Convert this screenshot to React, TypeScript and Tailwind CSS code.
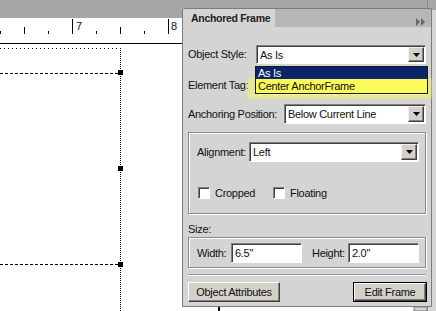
import type { ReactNode } from "react";

// quarter-inch ticks, 96px to the inch
const TICKS = [0, 24, 48, 72, 96, 120, 144, 168, 192];

function DropArrow() {
  return (
    <div className="w-[16px] my-[1px] mr-[1px] flex items-center justify-center bg-[#d4d0c8] border border-t-[#f0f0f0] border-l-[#f0f0f0] border-b-[#404040] border-r-[#404040] shadow-[inset_-1px_-1px_0_#808080]">
      <svg width="7" height="4" viewBox="0 0 7 4">
        <path d="M0 0h7L3.5 4z" fill="#000" />
      </svg>
    </div>
  );
}

function Select({ value, className = "" }: { value: string; className?: string }) {
  return (
    <div
      className={`flex bg-white border border-t-[#808080] border-l-[#808080] border-b-white border-r-white shadow-[inset_1px_1px_0_#404040] ${className}`}
    >
      <span className="flex-1 pl-[3px] pt-[1px] leading-[16px] whitespace-nowrap">{value}</span>
      <DropArrow />
    </div>
  );
}

function TextBox({ value, className = "" }: { value: string; className?: string }) {
  return (
    <div
      className={`h-[20px] bg-white border border-t-[#808080] border-l-[#808080] border-b-white border-r-white shadow-[inset_1px_1px_0_#404040] pl-[3px] pt-[1px] leading-[16px] ${className}`}
    >
      {value}
    </div>
  );
}

function Checkbox({ label, className = "" }: { label: string; className?: string }) {
  return (
    <div className={`flex items-center gap-[5px] ${className}`}>
      <div className="w-[12px] h-[12px] bg-white border border-t-[#808080] border-l-[#808080] border-b-white border-r-white shadow-[inset_1px_1px_0_#404040]" />
      <span>{label}</span>
    </div>
  );
}

function Button({ children, isDefault, className = "" }: { children: ReactNode; isDefault?: boolean; className?: string }) {
  const face = (
    <div className="flex-1 flex items-center justify-center bg-[#d4d0c8] border border-t-white border-l-white border-b-[#404040] border-r-[#404040] shadow-[inset_-1px_-1px_0_#808080] whitespace-nowrap">
      {children}
    </div>
  );
  if (isDefault) {
    return <div className={`h-[20px] flex border border-black ${className}`}>{face}</div>;
  }
  return <div className={`h-[20px] flex ${className}`}>{face}</div>;
}

function Ruler() {
  return (
    <svg width="427" height="25" className="block">
      {TICKS.map((x, i) => {
        const kind = (((i - 3) % 4) + 4) % 4;
        const top = kind === 0 ? 1 : kind === 2 ? 9 : 13;
        return <line key={x} x1={x + 0.5} x2={x + 0.5} y1={top} y2={16} stroke="#000" strokeWidth="1" />;
      })}
      <text x="76" y="12" fontSize="11" fontFamily="Liberation Sans, Arial, sans-serif" fill="#101030">
        7
      </text>
      <text x="171" y="12" fontSize="11" fontFamily="Liberation Sans, Arial, sans-serif" fill="#101030">
        8
      </text>
    </svg>
  );
}

function PageCanvas() {
  // the anchored frame outline on the document page
  return (
    <svg width="427" height="267" className="block">
      <line x1="0" x2="121" y1="4.5" y2="4.5" stroke="#000" strokeDasharray="1 3" />
      <line x1="120.5" x2="120.5" y1="4" y2="267" stroke="#000" strokeDasharray="1 1" />
      <line x1="0" x2="118" y1="29.5" y2="29.5" stroke="#000" strokeDasharray="3 2" />
      <line x1="0" x2="118" y1="220.5" y2="220.5" stroke="#000" strokeDasharray="3 2" />
      <rect x="118" y="26" width="5" height="5" fill="#000" />
      <rect x="118" y="122" width="5" height="5" fill="#000" />
      <rect x="118" y="218" width="5" height="5" fill="#000" />
      <rect x="218" y="262" width="2" height="5" fill="#000" />
      <rect x="414" y="263" width="13" height="4" fill="#d4d4d4" stroke="#777" strokeWidth="1" />
    </svg>
  );
}

function AnchoredFramePanel() {
  return (
    <div className="absolute left-[182px] top-[8px] w-[250px] h-[299px] flex flex-col bg-[#d4d4d4] border border-[#7c7c7c] rounded-tl-[3px] text-[11px] text-[#111] tracking-[-0.3px]">
      {/* Tab header */}
      <div className="flex h-[18px] bg-[#b6b6b6]">
        <div className="w-[92px] bg-[#d4d4d4] pl-[8px] font-bold text-[10.5px] leading-[18px] text-[#222] rounded-tl-[2px]">
          Anchored Frame
        </div>
        <div className="flex-1" />
        <svg width="10" height="8" viewBox="0 0 10 8" className="mt-[9px] mr-[5px]">
          <path d="M0 0l4 4-4 4zM5 0l4 4-4 4z" fill="#666" />
        </svg>
      </div>

      <div className="flex flex-col px-[5px]">
        <div className="flex items-center mt-[18px] h-[19px]">
          <span className="w-[68px]">Object Style:</span>
          <Select value="As Is" className="flex-1 h-[19px]" />
        </div>

        <div className="flex items-center mt-[12px] h-[19px]">
          <span className="w-[68px]">Element Tag:</span>
          <Select value="" className="flex-1 h-[19px]" />
        </div>

        <div className="flex items-center mt-[9px] h-[20px]">
          <span className="w-[96px]">Anchoring Position:</span>
          <Select value="Below Current Line" className="flex-1 h-[20px]" />
        </div>

        {/* Alignment group */}
        <div className="mt-[8px] h-[82px] flex flex-col border border-[#8c8c8c] shadow-[inset_1px_1px_0_#fff,1px_1px_0_#fff]">
          <div className="flex items-center mt-[9px] pl-[8px] pr-[6px]">
            <span className="w-[52px]">Alignment:</span>
            <Select value="Left" className="flex-1 h-[20px]" />
          </div>
          <div className="flex items-center mt-[23px] pl-[9px]">
            <Checkbox label="Cropped" className="w-[75px]" />
            <Checkbox label="Floating" />
          </div>
        </div>

        <div className="mt-[9px] h-[13px] leading-[13px]">Size:</div>

        {/* Size group */}
        <div className="mt-[1px] h-[31px] flex items-start pt-[5px] pl-[8px] border border-[#8c8c8c] shadow-[inset_1px_1px_0_#fff,1px_1px_0_#fff]">
          <span className="w-[34px] leading-[20px]">Width:</span>
          <TextBox value={'6.5"'} className="w-[71px]" />
          <span className="ml-[10px] w-[36px] leading-[20px]">Height:</span>
          <TextBox value={'2.0"'} className="w-[71px]" />
        </div>

        <div className="mt-[6px] h-[2px] border-t border-[#9a9a9a] border-b border-b-white" />

        <div className="flex mt-[6px]">
          <Button className="w-[92px]">Object Attributes</Button>
          <Button isDefault className="ml-auto w-[74px] -mr-[1px]">
            Edit Frame
          </Button>
        </div>
      </div>
    </div>
  );
}

export default function App() {
  return (
    <div className="relative w-[436px] h-[311px] overflow-hidden flex bg-white font-['Liberation_Sans',Arial,sans-serif]">
      <div className="flex-1 flex flex-col">
        <div className="h-[18px] bg-[#a6a6a6]" />
        <div className="h-[26px] bg-white border-b border-black">
          <Ruler />
        </div>
        <div className="flex-1 bg-white">
          <PageCanvas />
        </div>
      </div>
      <div className="w-[9px] flex flex-col border-l border-[#8a8a8a] bg-[#d6d6d6]">
        <div className="h-[10px] bg-[#a6a6a6]" />
      </div>

      <AnchoredFramePanel />

      {/* highlighter mark behind the open list */}
      <div className="absolute left-[247px] top-[78px] w-[185px] h-[21px] rounded-[3px] bg-[#f4f46a]/60 blur-[1px]" />

      {/* open Object Style list */}
      <div className="absolute left-[255px] top-[66px] w-[173px] h-[28px] flex flex-col bg-white border border-[#1a1a1a] text-[11px] tracking-[-0.3px]">
        <div className="h-[12px] bg-[#0a246a] text-white pl-[2px] leading-[12px]">As Is</div>
        <div className="h-[14px] bg-[#fbfb5c] text-[#111] pl-[2px] leading-[14px]">Center AnchorFrame</div>
      </div>
    </div>
  );
}
